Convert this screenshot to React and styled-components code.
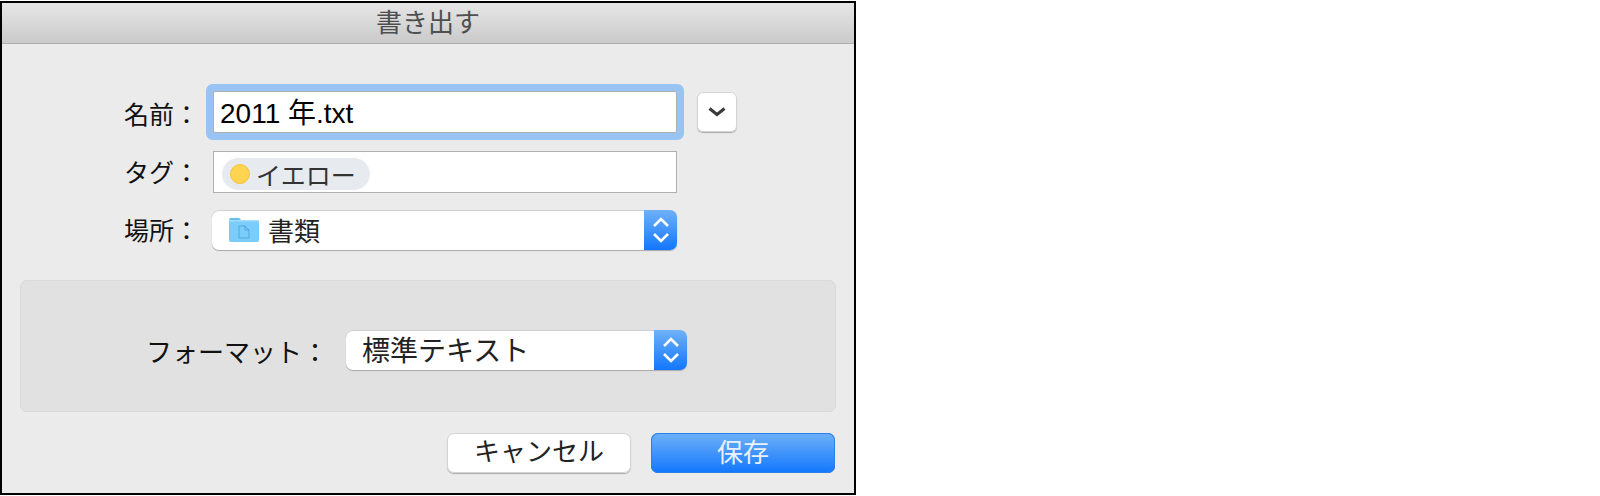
import React from 'react';
import styled, { createGlobalStyle } from 'styled-components';

const GlobalStyle = createGlobalStyle`
  html, body {
    margin: 0;
    padding: 0;
    background: #fff;
    font-family: "Liberation Sans", "Noto Sans CJK JP", sans-serif;
  }
`;

const blueGradient = 'linear-gradient(to bottom, #6fb1f8, #1277fd)';

const Dialog = styled.div`
  box-sizing: border-box;
  width: 856px;
  height: 494px;
  margin-top: 1px;
  border: 2px solid #000;
  background: #ebebeb;
`;

const TitleBar = styled.div`
  box-sizing: border-box;
  height: 41px;
  border-bottom: 1px solid #afafaf;
  background: linear-gradient(to bottom, #e6e6e6, #cacaca);
  color: #4f4f4f;
  font-size: 26px;
  line-height: 40px;
  text-align: center;
`;

const Form = styled.div`
  display: grid;
  grid-template-columns: 197px 464px 40px;
  column-gap: 14px;
  padding-top: 47px;
  align-items: center;
`;

const Label = styled.div`
  grid-column: 1;
  color: #111;
  font-size: ${p => p.$size || 25}px;
  text-align: right;
  white-space: nowrap;
`;

const NameLabel = styled(Label)`
  padding-top: 2px;
`;

const NameInput = styled.div`
  box-sizing: border-box;
  height: 42px;
  border: 1px solid #b0b0b0;
  background: #fff;
  box-shadow: 0 0 0 7px #99c3f3;
  border-radius: 2px;
  padding-left: 6px;
  color: #000;
  font-size: 28px;
  line-height: 44px;
`;

const TagInput = styled.div`
  box-sizing: border-box;
  grid-column: 2;
  height: 42px;
  margin-top: 18px;
  border: 1px solid #b0b0b0;
  background: #fff;
  padding: 6px 0 0 8px;
`;

const TagLabel = styled(Label)`
  margin-top: 16px;
`;

const TagChip = styled.div`
  box-sizing: border-box;
  display: inline-flex;
  align-items: center;
  width: 148px;
  height: 32px;
  padding-left: 8px;
  gap: 6px;
  border-radius: 16px;
  background: #e7ebef;
  color: #333;
  font-size: 25px;
`;

const TagDot = styled.span`
  box-sizing: border-box;
  width: 20px;
  height: 20px;
  border-radius: 50%;
  background: #ffd451;
  border: 1px solid #f5c242;
`;

const Select = styled.div`
  box-sizing: border-box;
  display: flex;
  align-items: center;
  width: ${p => p.$width}px;
  height: 40px;
  border-radius: 7px;
  background: #fff;
  box-shadow: inset 0 1px 0 #cfcfcf, 0 1px 1px #a8a8a8;
  color: #222;
  font-size: ${p => p.$size}px;
  overflow: hidden;
`;

const PlaceSelect = styled(Select)`
  grid-column: 2;
  margin-top: 17px;
  margin-left: -1px;
`;

const PlaceLabel = styled(Label)`
  margin-top: 15px;
`;

const SelectText = styled.div`
  flex: 1;
  display: flex;
  align-items: center;
  gap: 9px;
  padding: 0 0 2px ${p => p.$indent}px;
  white-space: nowrap;
`;

const Stepper = styled.div`
  width: 33px;
  height: 100%;
  display: flex;
  align-items: center;
  justify-content: center;
  background: ${blueGradient};
`;

const ArrowButton = styled.div`
  box-sizing: border-box;
  width: 40px;
  height: 40px;
  margin-left: 6px;
  display: flex;
  align-items: center;
  justify-content: center;
  border-radius: 6px;
  background: #fff;
  box-shadow: 0 1px 1px #a8a8a8, inset 0 0 0 1px #d4d4d4;
`;

const OptionsPanel = styled.div`
  box-sizing: border-box;
  height: 132px;
  margin: 30px 18px 0 18px;
  padding: 8px 0 0 125px;
  border: 1px solid #dadada;
  border-radius: 7px;
  background: #e1e1e1;
  display: flex;
  align-items: center;
  gap: 18px;
`;

const Footer = styled.div`
  display: flex;
  justify-content: flex-end;
  gap: 20px;
  margin: 21px 19px 0 0;
`;

const Button = styled.div`
  box-sizing: border-box;
  width: 184px;
  height: 40px;
  border-radius: 7px;
  text-align: center;
  font-size: 26px;
  line-height: ${p => (p.$primary ? 41 : 38)}px;
  color: ${p => (p.$primary ? '#e8f1ff' : '#222')};
  background: ${p => (p.$primary ? blueGradient : '#fff')};
  box-shadow: ${p => (p.$primary
    ? 'inset 0 0 0 1px #2a7fe8'
    : '0 1px 1px #a8a8a8, inset 0 0 0 1px #d4d4d4')};
`;

const Updown = () => (
  <svg width="20" height="30" viewBox="0 0 20 30" fill="none" stroke="#fff" strokeWidth="2.6">
    <path d="M3 11 L10 4 L17 11" />
    <path d="M3 19 L10 26 L17 19" />
  </svg>
);

const Chevron = () => (
  <svg width="20" height="12" viewBox="0 0 20 12" fill="none" stroke="#3a3a3a" strokeWidth="3">
    <path d="M2.5 2.5 L10 8.5 L17.5 2.5" />
  </svg>
);

const FolderIcon = () => (
  <svg width="30" height="25" viewBox="0 0 30 25">
    <path d="M0 3 Q0 1 2 1 H9 Q11 1 12 3 H0 Z" fill="#63bdf0" />
    <rect x="0" y="3" width="30" height="22" rx="2" fill="#7accfa" />
    <rect x="0" y="3" width="30" height="1.5" fill="#a4dcfb" />
    <path d="M10 9 H16 L20 13 V21 H10 Z M16 9 V13 H20" fill="none" stroke="#4ea6e0" strokeWidth="1" />
  </svg>
);

export default function App() {
  return (
    <>
      <GlobalStyle />
      <Dialog>
        <TitleBar>書き出す</TitleBar>
        <Form>
          <NameLabel>名前：</NameLabel>
          <NameInput>2011 年.txt</NameInput>
          <ArrowButton><Chevron /></ArrowButton>
          <TagLabel>タグ：</TagLabel>
          <TagInput>
            <TagChip><TagDot />イエロー</TagChip>
          </TagInput>
          <PlaceLabel>場所：</PlaceLabel>
          <PlaceSelect $width={465} $size={26}>
            <SelectText $indent={17}><FolderIcon />書類</SelectText>
            <Stepper><Updown /></Stepper>
          </PlaceSelect>
        </Form>
        <OptionsPanel>
          <Label $size={26}>フォーマット：</Label>
          <Select $width={341} $size={28}>
            <SelectText $indent={16}>標準テキスト</SelectText>
            <Stepper><Updown /></Stepper>
          </Select>
        </OptionsPanel>
        <Footer>
          <Button>キャンセル</Button>
          <Button $primary>保存</Button>
        </Footer>
      </Dialog>
    </>
  );
}
